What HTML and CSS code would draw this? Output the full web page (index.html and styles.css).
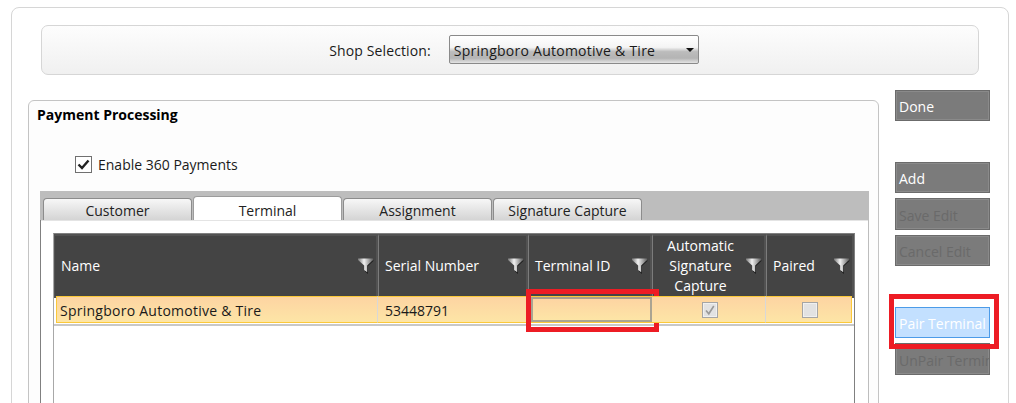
FILE: index.html
```html
<!DOCTYPE html>
<html lang="en">
<head>
<meta charset="utf-8">
<title>Payment Processing</title>
<link rel="stylesheet" href="styles.css">
</head>
<body>
<svg class="defs" width="0" height="0" aria-hidden="true">
  <defs>
    <linearGradient id="fg" x1="0" y1="0" x2="1" y2="0">
      <stop offset="0" stop-color="#777"/>
      <stop offset=".4" stop-color="#f2f2f2"/>
      <stop offset=".7" stop-color="#aaa"/>
      <stop offset="1" stop-color="#5e5e5e"/>
    </linearGradient>
    <symbol id="funnel" viewBox="0 0 16 16">
      <path d="M2 2.5H16L10 8V16L7 13.5V8Z" fill="#1e1e1e"/>
      <path d="M0 .5H15V2L9.2 7.5V14.2L6.2 12V7.5L0 2Z" fill="url(#fg)"/>
    </symbol>
  </defs>
</svg>
<div class="shell">
  <div class="shop">
    <span class="shop-label">Shop Selection:</span>
    <div class="select">
      <span>Springboro Automotive &amp; Tire</span>
      <i class="caret"></i>
    </div>
  </div>
  <div class="main">
    <section class="panel">
      <h2 class="panel-title">Payment Processing</h2>
      <label class="enable">
        <span class="check">
          <svg viewBox="0 0 15 15" width="15" height="15"><path d="M2.5 7.5L6 11 12.5 3.5" fill="none" stroke="#222" stroke-width="2.4"/></svg>
        </span>
        Enable 360 Payments
      </label>
      <div class="tabs">
        <div class="tabstrip">
          <div class="tab">Customer</div>
          <div class="tab active">Terminal</div>
          <div class="tab">Assignment</div>
          <div class="tab">Signature Capture</div>
        </div>
        <div class="tabbody">
          <div class="grid">
            <div class="head">
              <div class="hcell"><span>Name</span><svg class="fn"><use href="#funnel"/></svg></div>
              <div class="hcell"><span>Serial Number</span><svg class="fn"><use href="#funnel"/></svg></div>
              <div class="hcell"><span>Terminal ID</span><svg class="fn"><use href="#funnel"/></svg></div>
              <div class="hcell"><span class="wrap">Automatic Signature Capture</span><svg class="fn"><use href="#funnel"/></svg></div>
              <div class="hcell"><span>Paired</span><svg class="fn"><use href="#funnel"/></svg></div>
            </div>
            <div class="row">
              <div class="cell name">Springboro Automotive &amp; Tire</div>
              <div class="cell">53448791</div>
              <div class="cell idcell">
                <div class="input"></div>
                <div class="red red-id"></div>
              </div>
              <div class="cell center">
                <span class="dis"><svg viewBox="0 0 14 14" width="14" height="14"><path d="M3 7.5L5.8 10.8 10.8 3" fill="none" stroke="#999" stroke-width="1.6"/></svg></span>
              </div>
              <div class="cell center"><span class="dis"></span></div>
            </div>
          </div>
        </div>
      </div>
    </section>
    <aside class="side">
      <button class="btn on done">Done</button>
      <button class="btn on add">Add</button>
      <button class="btn off tall">Save Edit</button>
      <button class="btn off">Cancel Edit</button>
      <div class="pairwrap">
        <button class="btn hot">Pair Terminal</button>
        <div class="red red-pair"></div>
      </div>
      <button class="btn off tall">UnPair Terminal</button>
    </aside>
  </div>
</div>
</body>
</html>
```
FILE: styles.css
```css
* { box-sizing: border-box; }
html, body { margin: 0; height: 403px; overflow: hidden; background: #fff; }
body { font-family: "Open Sans", "Noto Sans", sans-serif; font-size: 14px; color: #1a1a1a; }
.defs { position: absolute; }

.shell {
  margin: 7px 7px 0 11px;
  height: 520px;
  padding: 17px 18px 0 16px;
  border: 1px solid #d6d6d6;
  border-radius: 8px;
  background: #fff;
}

.shop {
  height: 50px;
  margin: 0 11px 0 13px;
  display: flex;
  align-items: center;
  justify-content: center;
  gap: 18px;
  border: 1px solid #d6d6d6;
  border-radius: 7px;
  background: linear-gradient(#fdfdfd, #f0f0f0);
}
.shop-label { margin-left: 8px; letter-spacing: .13px; }
.select {
  width: 250px;
  height: 29px;
  margin-top: -1px;
  padding: 1px 4px 0 4px;
  display: flex;
  align-items: center;
  justify-content: space-between;
  border: 1px solid #8a8a8a;
  border-radius: 2px;
  letter-spacing: .25px;
  background: linear-gradient(#fff 0, #f4f4f4 42%, #bcbcbc 58%, #b4b4b4 82%, #e4e4e4 100%);
}
.caret {
  border-left: 4px solid transparent;
  border-right: 4px solid transparent;
  border-top: 4px solid #111;
}

.main { display: flex; gap: 16px; margin-top: 15px; align-items: flex-start; }

.panel {
  width: 851px;
  height: 420px;
  margin-top: 10px;
  padding: 0 10px 0 11px;
  border: 1px solid #c4c4c4;
  border-radius: 6px 6px 0 0;
  background: #fdfdfd;
}
.panel-title { margin: 4px 0 0 -3px; font-size: 14px; line-height: 20px; font-weight: 700; color: #000; }
.enable {
  display: flex;
  align-items: center;
  gap: 6px;
  margin: 29px 0 0 35px;
  height: 20px;
}
.check {
  width: 17px;
  height: 17px;
  display: flex;
  align-items: center;
  justify-content: center;
  border: 1px solid #707070;
  background: #fff;
}

.tabs { margin-top: 17px; width: 829px; }
.tabstrip {
  height: 29px;
  padding: 5px 0 0 3px;
  display: flex;
  align-items: flex-end;
  gap: 1px;
  background: #bdbdbd;
}
.tab {
  width: 149px;
  height: 22px;
  padding-top: 2px;
  display: flex;
  align-items: center;
  justify-content: center;
  border: 1px solid #8c8c8c;
  border-bottom: 0;
  border-radius: 4px 4px 0 0;
  background: linear-gradient(#f7f7f7, #d4d4d4);
  color: #222;
}
.tab.active {
  height: 24px;
  padding-top: 4px;
  background: #fff;
  border-color: #9c9c9c;
}
.tabbody {
  height: 300px;
  padding: 13px 13px 0 12px;
  border-left: 1px solid #808080;
  border-right: 1px solid #bdbdbd;
  background: #fff;
  box-shadow: inset 0 1px 0 #e4e4e4;
}
.grid {
  height: 260px;
  width: 802px;
  border: 1px solid #a8a8a8;
  border-top-color: #808080;
  border-right-color: #808080;
}
.head {
  display: grid;
  grid-template-columns: 324px 150px 124px 114px 1fr;
  height: 60px;
}
.row {
  display: grid;
  grid-template-columns: 322px 150px 124px 114px 1fr;
  height: 32px;
  padding: 2px 2px 1px;
  border-bottom: 2px solid #c8c8c8;
}
.hcell {
  position: relative;
  display: flex;
  align-items: center;
  padding: 0 24px 0 6px;
  background: #444;
  border: 2px solid #525252;
  border-left: 1px solid #7c7c7c;
  color: #fff;
  line-height: 20px;
}
.hcell:first-child { border-left-color: #525252; }
.hcell .wrap { text-align: center; width: 100%; margin-left: 2px; }
.fn { position: absolute; right: 2px; top: 22px; width: 16px; height: 16px; }
.cell {
  position: relative;
  display: flex;
  align-items: center;
  padding: 1px 0 0 7px;
  background: linear-gradient(#fdd4a2, #fde5a6);
  border-top: 1px solid #fbc93a;
  border-bottom: 1px solid #fbc93a;
  border-right: 1px solid #d8d8d8;
}
.name { padding-left: 3px; letter-spacing: .25px; border-left: 1px solid #fbc93a; }
.cell:last-child { border-right: 1px solid #fbc93a; }
.center { justify-content: center; padding: 0 0 0 2px; }
.idcell { padding: 0 0 0 3px; border-right: 0; }
.input {
  width: 121px;
  height: 25px;
  border: 2px solid #aaa492;
  border-top-color: #a89f8c;
  background: linear-gradient(#fdd4a2, #fde5a6);
}
.dis {
  width: 16px;
  height: 16px;
  display: flex;
  align-items: center;
  justify-content: center;
  border: 1px solid #a5a5a5;
  background: #e2e2e2;
  box-shadow: inset 0 0 0 1px #f0f0f0;
}

.side { width: 95px; display: flex; flex-direction: column; }
.btn {
  display: block;
  width: 95px;
  height: 31px;
  padding: 2px 0 0 3px;
  text-align: left;
  white-space: nowrap;
  overflow: hidden;
  font: inherit;
  background: #7b7b7b;
  border: 1px solid #6b6b6b;
  box-shadow: inset 0 0 0 1px #8a8a8a;
  color: #fff;
}
.tall { height: 32px; }
.off { color: #6a6a6a; margin-top: 5px; }
.done { margin-bottom: 41px; }
.hot {
  background: #c3e0ff;
  border-color: #4c9be8;
  box-shadow: none;
  color: #fff;
}
.pairwrap { position: relative; margin-top: 41px; }

.red { position: absolute; border: 5px solid #ed1c24; pointer-events: none; }
.red-pair { left: -6px; top: -13px; width: 110px; height: 55px; }
.red-id { left: -2px; top: -8px; width: 133px; height: 43px; }
```
